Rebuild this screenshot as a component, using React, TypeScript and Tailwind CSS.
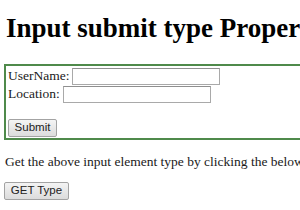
export default function App() {
  return (
    <div className="w-[300px] h-[210px] overflow-hidden bg-white">
      <div className="w-[380px] pl-[4px] text-[#1a1a1a] font-['Liberation_Serif',serif]">
        {/* Title */}
        <h1 className="mt-[13px] pl-[2px] h-[31px] leading-[31px] text-[27px] font-bold text-black whitespace-nowrap">
          Input submit type Property
        </h1>

        {/* Form box */}
        <div className="mt-[20px] border-2 border-[#4f8a4b] pl-[2px] pt-[1px] pb-[1px] text-[13.5px]">
          <div className="flex items-center h-[18px] gap-[3px]">
            <span>UserName:</span>
            <input
              type="text"
              className="w-[148px] h-[17px] bg-white border border-[#a9a9a9] border-t-[#8f8f8f] outline-none"
            />
          </div>
          <div className="flex items-center h-[18px] gap-[3px]">
            <span>Location:</span>
            <input
              type="text"
              className="w-[148px] h-[17px] bg-white border border-[#a9a9a9] border-t-[#8f8f8f] outline-none"
            />
          </div>
          <div className="h-[16px]" />
          <button
            type="button"
            className="block w-[49px] h-[18px] bg-gradient-to-b from-[#f4f4f4] to-[#dcdcdc] border border-[#a3a3a3] rounded-[2px] text-[11.5px] leading-none text-[#222] font-['Liberation_Sans',Arial,sans-serif]"
          >
            Submit
          </button>
        </div>

        <p className="mt-[13px] pl-[1px] h-[18px] leading-[18px] text-[13.5px] whitespace-nowrap">
          Get the above input element type by clicking the below button.
        </p>

        <button
          type="button"
          className="block mt-[11px] w-[65px] h-[18px] bg-gradient-to-b from-[#f4f4f4] to-[#dcdcdc] border border-[#a3a3a3] rounded-[2px] text-[11.5px] leading-none text-[#222] font-['Liberation_Sans',Arial,sans-serif]"
        >
          GET Type
        </button>
      </div>
    </div>
  );
}
